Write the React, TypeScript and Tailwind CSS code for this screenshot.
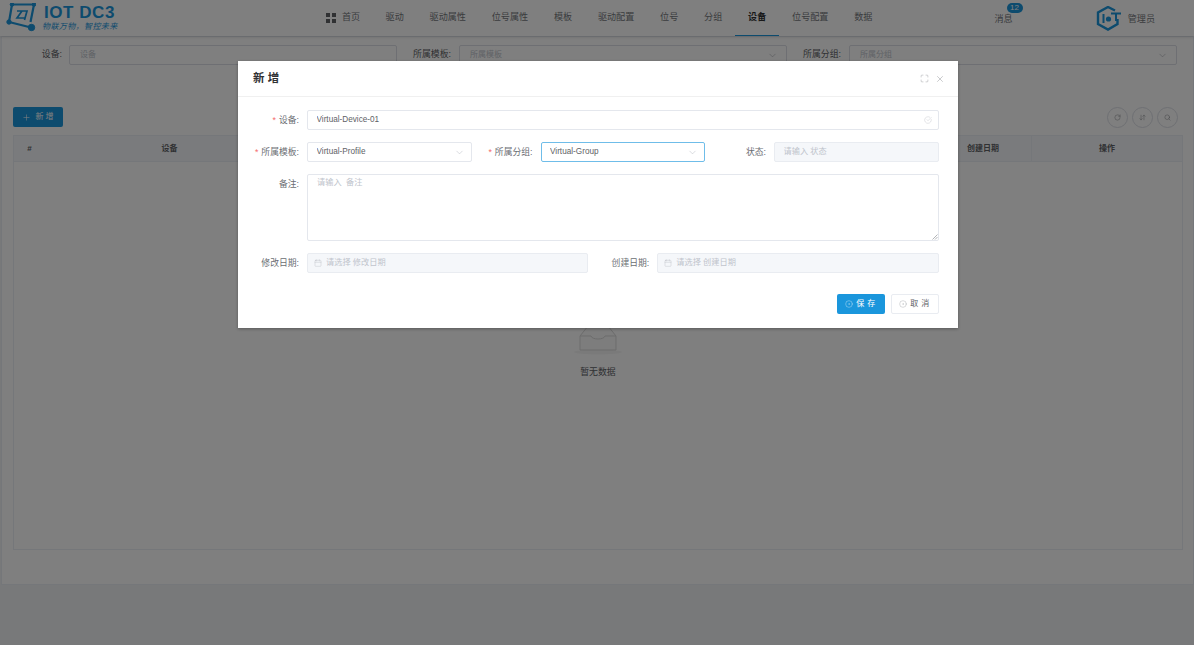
import { ChevronDown, CheckCircle, Maximize, X, Calendar, Plus, RotateCw, ArrowDownUp, Search, CircleDot } from "lucide-react";
import type { ReactNode } from "react";

const nav = ["驱动", "驱动属性", "位号属性", "模板", "驱动配置", "位号", "分组", "设备", "位号配置", "数据"];

function Logo() {
  return (
    <svg width="30" height="30" viewBox="0 0 30 30" fill="none" stroke="#1a96dc" className="shrink-0">
      <path d="M6 1.5 H28 L24.5 19 M6 1.5 L3 19 L25 24.5" strokeWidth="2.2" />
      <path d="M11 8 H21 L18.5 17 M16 8 L11 15 H19" strokeWidth="1.7" />
      <circle cx="6" cy="1.5" r="1.8" fill="#1a96dc" />
      <circle cx="28" cy="1.5" r="1.8" fill="#1a96dc" />
      <circle cx="3" cy="19" r="2.2" fill="#1a96dc" />
      <circle cx="25.5" cy="24.5" r="3.2" fill="#1a96dc" />
    </svg>
  );
}

function AdminIcon() {
  return (
    <svg width="25" height="25" viewBox="0 0 25 25" fill="none" className="shrink-0">
      <path d="M19 4.5 L12 1 L2 6.5 V18 L12 23.5 L21.5 18 V13" stroke="#1a96dc" strokeWidth="2.4" />
      <path d="M7.5 8 V17" stroke="#1a96dc" strokeWidth="2" />
      <circle cx="12.5" cy="13" r="2.6" fill="#1a96dc" />
      <path d="M15 7.5 H25 M20 7.5 V15" stroke="#1a96dc" strokeWidth="2" />
    </svg>
  );
}

function Header() {
  return (
    <header className="h-[36px] shrink-0 bg-white shadow-[0_1px_3px_rgba(0,0,0,0.15)] flex items-center relative">
      <div className="w-[326px] shrink-0 flex items-center pl-[6px]">
        <Logo />
        <div className="flex flex-col ml-[8px] mt-[-1px]">
          <span className="text-[17px] leading-[17px] font-bold text-[#1a96dc] tracking-[0.55px]">IOT DC3</span>
          <span className="text-[8px] leading-[10px] text-[#1a96dc] tracking-[0.4px] italic -ml-[2px] mt-[1px]">物联万物，智控未来</span>
        </div>
      </div>
      <nav className="flex items-center h-full text-[9.1px] text-[#75787d]">
        <div className="flex items-center gap-[6px] pr-[12.5px] h-full">
          <span className="grid grid-cols-2 gap-[2px]">
            <i className="w-[4px] h-[4px] bg-[#606266]" />
            <i className="w-[4px] h-[4px] bg-[#606266]" />
            <i className="w-[4px] h-[4px] bg-[#606266]" />
            <i className="w-[4px] h-[4px] bg-[#606266]" />
          </span>
          首页
        </div>
        {nav.map((item) =>
          item === "设备" ? (
            <div key={item} className="h-full flex items-center px-[12.9px] font-bold text-[#303133] border-b border-[#1a96dc]">
              {item}
            </div>
          ) : (
            <div key={item} className="h-full flex items-center px-[12.9px]">
              {item}
            </div>
          )
        )}
      </nav>
      <div className="flex-1" />
      <div className="relative text-[9.1px] text-[#75787d] mr-[83px] mt-[3px]">
        消息
        <span className="absolute -top-[10px] left-[12px] w-[16px] h-[10px] rounded-full bg-[#1a96dc] text-white text-[8px] leading-[10px] text-center">12</span>
      </div>
      <div className="flex items-center gap-[7px] mr-[39px]">
        <AdminIcon />
        <span className="text-[9.1px] text-[#75787d] mt-[3px]">管理员</span>
      </div>
    </header>
  );
}

function FilterBox({ text, select }: { text: string; select?: boolean }) {
  return (
    <div className="flex-1 h-[20px] border border-[#dcdfe6] rounded-[2px] bg-white flex items-center pl-[10px] pr-[8px] text-[8px] text-[#c0c4cc]">
      <span className="flex-1">{text}</span>
      {select && <ChevronDown size={11} strokeWidth={1} className="text-[#909399]" />}
    </div>
  );
}

function Page() {
  return (
    <main className="h-[549px] ml-[1px] bg-white border border-[#ebeef5] flex flex-col pl-[11px] pr-[12px] pt-[8px]">
      <div className="flex items-center text-[8.9px] text-[#606266] h-[20px]">
        <span className="w-[56px] pr-[7px] text-right shrink-0">设备:</span>
        <FilterBox text="设备" />
        <span className="w-[62px] pr-[8px] text-right shrink-0">所属模板:</span>
        <FilterBox text="所属模板" select />
        <span className="w-[62px] pr-[8px] text-right shrink-0">所属分组:</span>
        <FilterBox text="所属分组" select />
        <span className="w-[4px] shrink-0" />
      </div>
      <div className="flex items-center justify-between mt-[42px] h-[20px] pr-[3px]">
        <button className="w-[50px] h-[20px] bg-[#1a96dc] rounded-[2px] text-white text-[8px] flex items-center justify-center gap-[4px]">
          <Plus size={9} strokeWidth={1.5} />新 增
        </button>
        <div className="flex gap-[4px]">
          {[RotateCw, ArrowDownUp, Search].map((Icon, i) => (
            <span key={i} className="w-[21px] h-[21px] rounded-full border border-[#dcdfe6] flex items-center justify-center text-[#7b7e83]">
              <Icon size={7} strokeWidth={1.5} />
            </span>
          ))}
        </div>
      </div>
      <div className="mt-[8px] flex-1 mb-[34px] mr-[-2px] border border-[#ebeef5] flex flex-col">
        <div className="h-[26px] shrink-0 bg-[#f5f7fa] border-b border-[#ebeef5] flex text-[8px] font-bold text-[#606266] items-center text-center">
          <span className="w-[31px]">#</span>
          <span className="w-[249px]">设备</span>
          <span className="flex-1" />
          <span className="w-[100px] pl-[4px]">创建日期</span>
          <span className="w-[151px] h-full flex items-center justify-center border-l border-[#ebeef5]">操作</span>
        </div>
        <div className="flex flex-col items-center pt-[160px]">
          <svg width="48" height="34" viewBox="0 0 48 34" fill="none">
            <ellipse cx="24" cy="30" rx="24" ry="2.5" fill="#f5f5f5" />
            <path d="M6 14 L14 4 H34 L42 14 V28 H6 Z" fill="#fafafa" stroke="#d9d9d9" />
            <path d="M6 14 H17 C18 18 30 18 31 14 H42" stroke="#d9d9d9" />
          </svg>
          <span className="text-[8.9px] text-[#606266] mt-[10px]">暂无数据</span>
        </div>
      </div>
    </main>
  );
}

function Field({ label, required, children }: { label: string; required?: boolean; children: ReactNode }) {
  return (
    <div className="flex min-w-0">
      <label className="w-[61px] shrink-0 text-right text-[8.8px] leading-[20px] text-[#6b6e73] whitespace-nowrap flex justify-end">
        {required && <span className="text-[#f56c6c] mr-[3px]">*</span>}
        {label}:
      </label>
      <div className="ml-[8px] flex-1 min-w-0">{children}</div>
    </div>
  );
}

function DialogInput({ value, placeholder, select, focused, disabled, date, check }: {
  value?: string;
  placeholder?: string;
  select?: boolean;
  focused?: boolean;
  disabled?: boolean;
  date?: boolean;
  check?: boolean;
}) {
  const cls = focused
    ? "border-[#6fbde9] bg-white"
    : disabled
      ? "border-[#e9ecf1] bg-[#f5f7fa]"
      : "border-[#e4e7ed] bg-white";
  return (
    <div className={`h-[20px] border rounded-[2px] flex items-center text-[8.2px] ${date ? "pl-[6px]" : "pl-[8.5px]"} pr-[6px] ${cls}`}>
      {date && <Calendar size={8} strokeWidth={1} className="text-[#b0b4bc] mr-[4px]" />}
      <span className={`flex-1 truncate ${value ? "text-[#606266]" : "text-[#c0c4cc]"}`}>{value || placeholder}</span>
      {select && <ChevronDown size={11} strokeWidth={1} className="text-[#b0b4bc]" />}
      {check && <CheckCircle size={8} strokeWidth={1} className="text-[#b0b4bc]" />}
    </div>
  );
}

function Dialog() {
  return (
    <div className="absolute inset-0 bg-black/50">
      <div className="ml-[238px] mt-[61px] w-[719.5px] bg-white shadow-[0_1px_3px_rgba(0,0,0,0.3)]">
        <div className="h-[36px] border-b border-[#f0f0f0] flex items-center pl-[15px] pr-[13px]">
          <span className="flex-1 text-[11.5px] font-bold text-[#303133]">新 增</span>
          <Maximize size={9} strokeWidth={1} className="text-[#808388] mr-[6px]" />
          <X size={10} strokeWidth={1} className="text-[#808388]" />
        </div>
        <div className="pt-[13px] pr-[19px] pb-[14px] flex flex-col gap-[12px]">
          <Field label="设备" required>
            <DialogInput value="Virtual-Device-01" check />
          </Field>
          <div className="grid grid-cols-3">
            <Field label="所属模板" required>
              <DialogInput value="Virtual-Profile" select />
            </Field>
            <Field label="所属分组" required>
              <DialogInput value="Virtual-Group" select focused />
            </Field>
            <Field label="状态">
              <DialogInput placeholder="请输入 状态" disabled />
            </Field>
          </div>
          <Field label="备注">
            <div className="relative h-[67px] border border-[#e4e7ed] rounded-[2px] px-[9px] py-[2px] text-[8.2px] text-[#c0c4cc] whitespace-pre">
              请输入  备注
              <svg width="6" height="6" viewBox="0 0 6 6" className="absolute right-0 bottom-0" stroke="#909399" strokeWidth="0.7">
                <path d="M0.5 5.5 L5.5 0.5 M3 5.5 L5.5 3" />
              </svg>
            </div>
          </Field>
          <div className="grid grid-cols-2">
            <Field label="修改日期">
              <DialogInput placeholder="请选择 修改日期" disabled date />
            </Field>
            <Field label="创建日期">
              <DialogInput placeholder="请选择 创建日期" disabled date />
            </Field>
          </div>
          <div className="flex justify-end gap-[6px] mt-[9px]">
            <button className="w-[48px] h-[20px] bg-[#1a96dc] rounded-[2px] text-white text-[8px] tracking-[0.5px] flex items-center justify-center gap-[3px]">
              <CircleDot size={8} strokeWidth={1} />保 存
            </button>
            <button className="w-[48px] h-[20px] border border-[#e9ecf1] rounded-[2px] text-[#606266] text-[8px] tracking-[0.5px] flex items-center justify-center gap-[3px]">
              <CircleDot size={8} strokeWidth={1} className="text-[#909399]" />取 消
            </button>
          </div>
        </div>
      </div>
    </div>
  );
}

export default function App() {
  return (
    <div className="relative w-[1194px] h-[645px] overflow-hidden bg-[#f0f2f5] [font-family:'Liberation_Sans','Noto_Sans_CJK_SC',sans-serif]">
      <Header />
      <Page />
      <Dialog />
    </div>
  );
}
